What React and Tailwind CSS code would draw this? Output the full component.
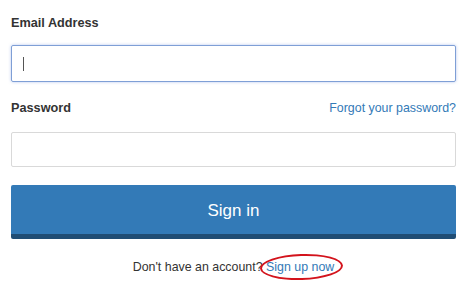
export default function App() {
  return (
    <div className="w-[473px] h-[289px] bg-white px-[11px] pt-[13px] font-['Liberation_Sans',Arial,sans-serif] text-[#333]">
      <label className="block text-[12.7px] leading-[20px] font-bold">Email Address</label>
      <div className="mt-[12px] h-[37px] w-[445px] rounded-[2px] border border-[#7f9fd6] shadow-[0_0_3px_rgba(102,140,220,0.5)] flex items-center pl-[11px]">
        <span className="block w-px h-[14px] bg-[#555]" />
      </div>

      <div className="mt-[16px] flex items-center justify-between w-[445px]">
        <label className="text-[12.7px] leading-[20px] font-bold">Password</label>
        <a className="text-[12.4px] leading-[20px] text-[#337ab7]">Forgot your password?</a>
      </div>
      <div className="mt-[14px] h-[35px] w-[445px] rounded-[2px] border border-[#d9d9d9]" />

      <button className="mt-[18px] h-[54px] w-[445px] rounded-[2px] bg-[#337ab7] border-b-[5px] border-[#204d74] text-white text-[17px] flex items-center justify-center pt-[3px]">
        Sign in
      </button>

      <p className="mt-[18px] w-[445px] text-center text-[12.4px] leading-[20px]">
        Don't have an account?{' '}
        <span className="relative text-[#337ab7]">
          Sign up now
          <span className="absolute -left-[6px] -right-[9px] -top-[6px] -bottom-[6px] rounded-[50%] border-2 border-[#d3131c] rotate-[-2deg]" />
        </span>
      </p>
    </div>
  );
}
